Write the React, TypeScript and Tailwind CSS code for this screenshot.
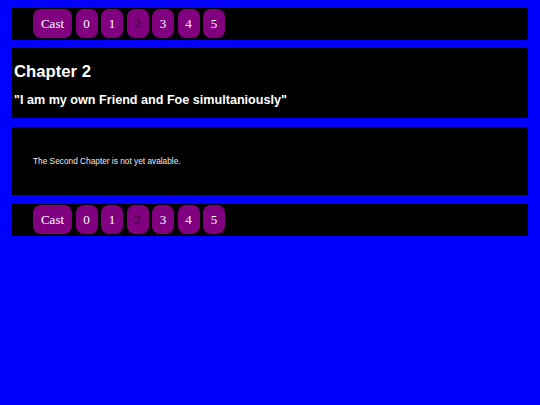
import React from 'react';

const pages = ['0', '1', '2', '3', '4', '5'];
const current = '2';

function ChapterNav() {
  return (
    <div className="flex h-[32px] items-start gap-[3.5px] bg-black pl-[21px] pt-[1px]">
      <a className="flex h-[29px] w-[39px] items-center justify-center rounded-[8px] bg-[#800080] pt-[1px] text-[13px] text-white [font-family:'Liberation_Serif',serif]">
        Cast
      </a>
      {pages.map((p) => (
        <a
          key={p}
          className={`flex h-[29px] w-[22px] items-center justify-center rounded-[8px] bg-[#800080] pt-[1px] text-[13px] [font-family:'Liberation_Serif',serif] ${
            p === current ? 'text-[#220022]' : 'text-white'
          }`}
        >
          {p}
        </a>
      ))}
    </div>
  );
}

export default function App() {
  return (
    <div className="min-h-screen w-full bg-[#0000ff] px-[12px] pt-[8px] [font-family:'Liberation_Sans',Arial,sans-serif]">
      <ChapterNav />

      {/* Titel */}
      <div className="mt-[8px] flex h-[70px] flex-col bg-black pl-[2px] pt-[13.6px] text-white">
        <h2 className="text-[16.7px] font-bold leading-[19.2px]">Chapter 2</h2>
        <p className="mt-[12px] text-[12.6px] font-bold leading-[14.5px]">
          "I am my own Friend and Foe simultaniously"
        </p>
      </div>

      {/* Inhalt */}
      <div className="mt-[9px] h-[68px] bg-black pl-[21px] pt-[29px]">
        <p className="text-[8.3px] leading-[10px] text-[#eeeeee]">
          The Second Chapter is not yet avalable.
        </p>
      </div>

      <div className="mt-[9px]">
        <ChapterNav />
      </div>
    </div>
  );
}
